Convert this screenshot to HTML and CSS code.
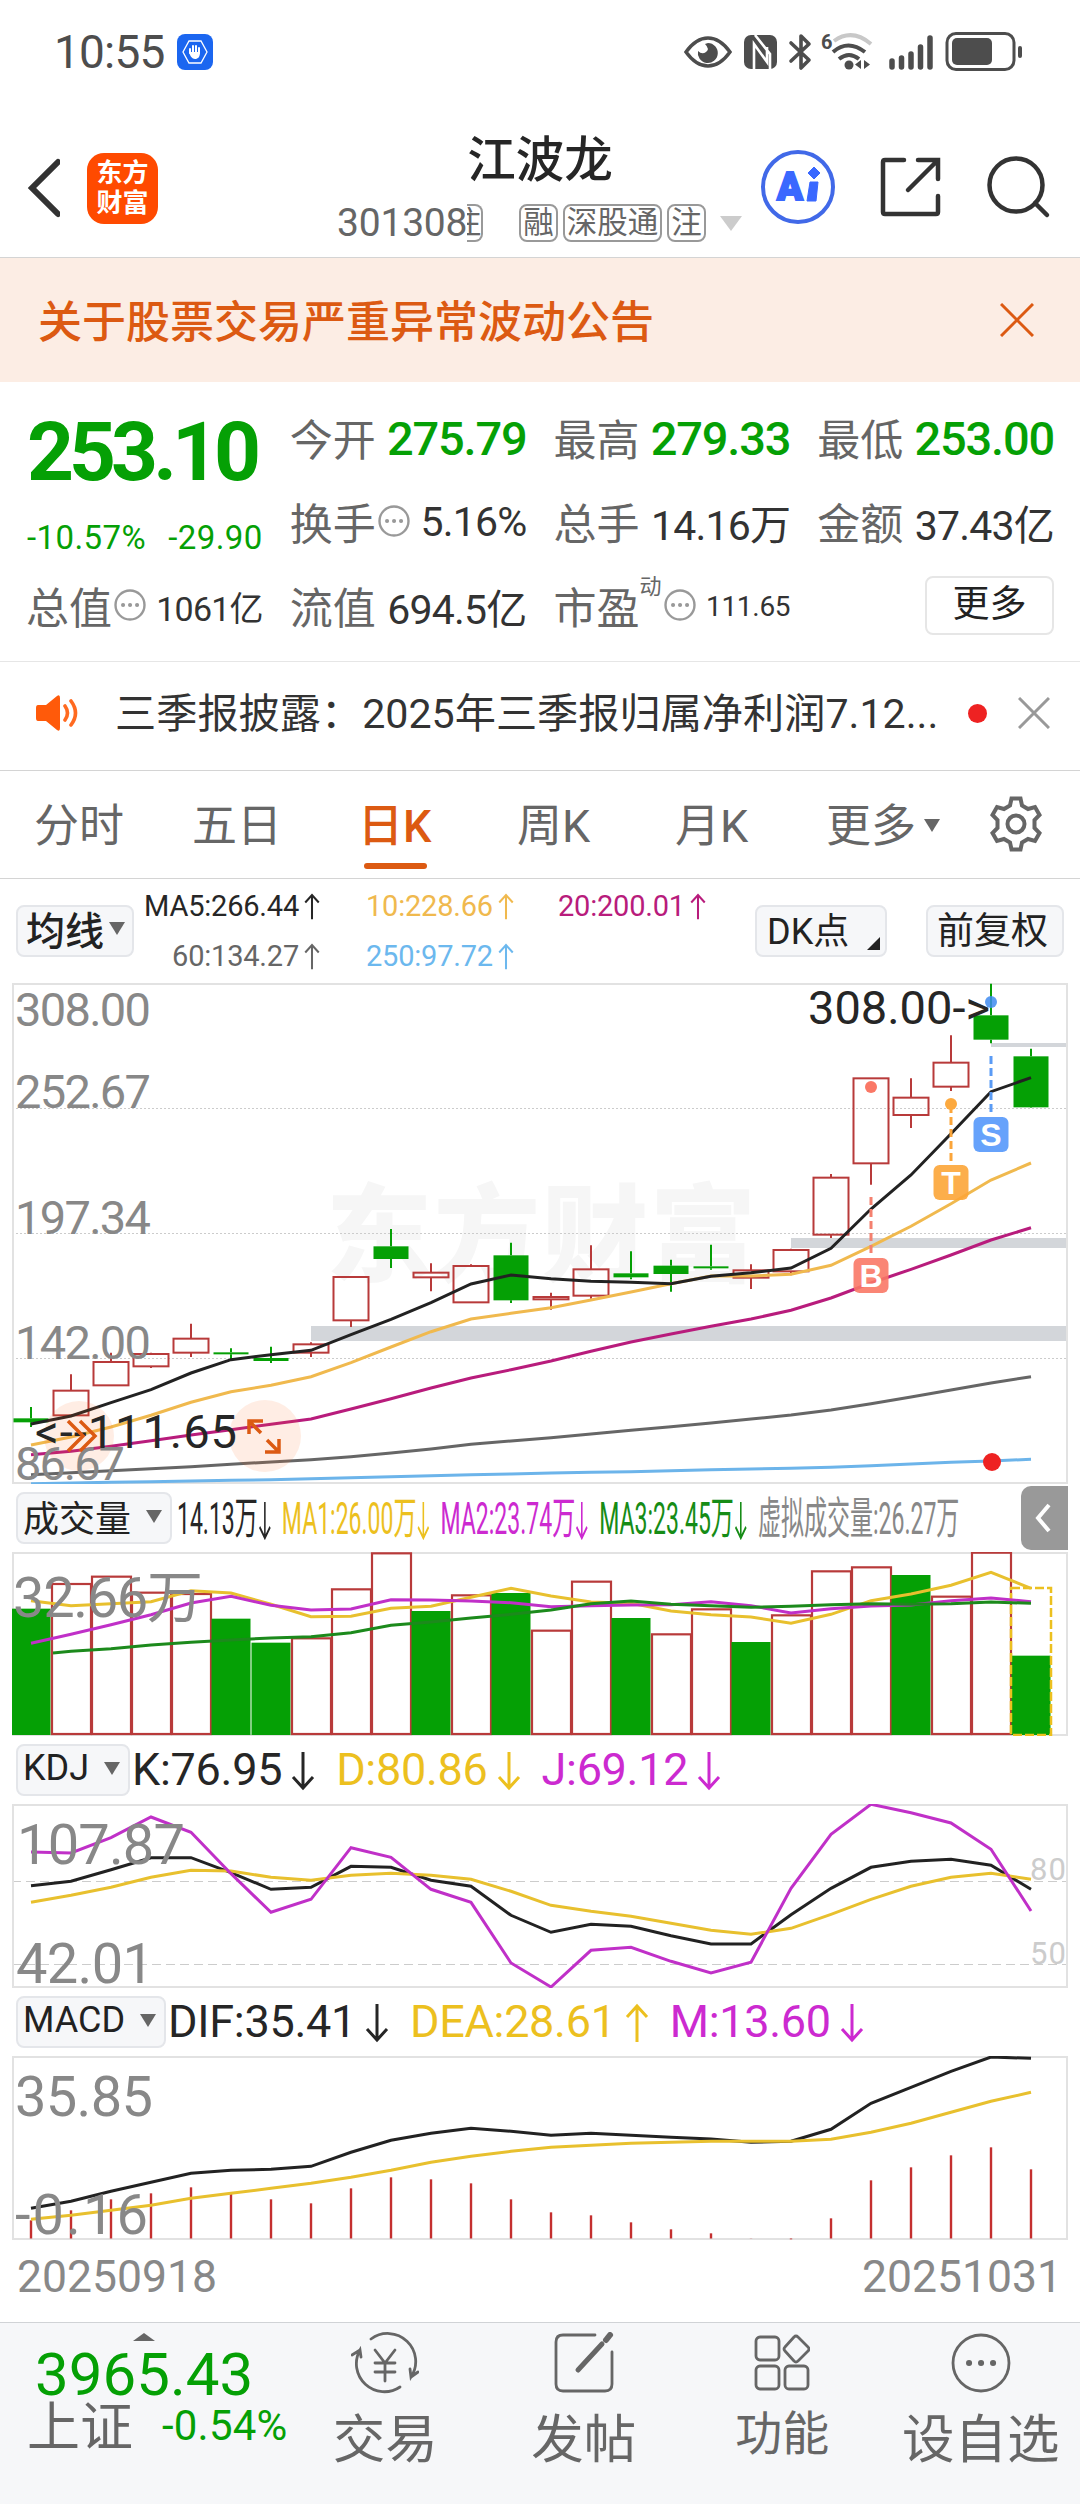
FILE: index.html
```html
<!DOCTYPE html>
<html lang="zh-CN">
<head>
  <meta charset="utf-8">
  <title>江波龙 301308</title>
  <link rel="stylesheet" href="styles.css">
</head>
<body>
  <svg class="defs">
    <symbol id="up" viewBox="0 0 26 40"><path d="M13 39V3M3 14L13 3l10 11"/></symbol>
    <symbol id="down" viewBox="0 0 26 40"><path d="M13 1v36M3 26l10 11 10-11"/></symbol>
    <symbol id="more" viewBox="0 0 34 34"><circle cx="17" cy="17" r="14.5"/><path d="M10 17h.1M17 17h.1M24 17h.1"/></symbol>
  </svg>

  <div class="status">
    <span class="clock">10:55</span>
    <svg class="hand" width="36" height="36" viewBox="0 0 36 36">
      <rect width="36" height="36" rx="8" fill="#1b66f0"/>
      <path d="M12 7h12l6 11-6 11H12L6 18z" fill="none" stroke="#fff" stroke-width="1.3"/>
      <path d="M13 19v-4M16 18v-6M19 18v-6M22 19v-5" stroke="#fff" stroke-width="2" stroke-linecap="round"/>
      <path d="M12 18h11c0 5-2 7-5 7s-5-3-6-7z" fill="#fff"/>
    </svg>
    <svg class="sys" width="340" height="40" viewBox="0 0 340 40">
      <path d="M2 20q10-14 22-14t22 14q-10 14-22 14T2 20z" fill="none" stroke="#4d4d4d" stroke-width="3.5"/>
      <path d="M24 11a10 10 0 1 1-10 8q4 4 8 1t-1-8z" fill="#4d4d4d"/>
      <rect x="60" y="3" width="33" height="34" rx="7" fill="#4d4d4d"/>
      <path d="M70 37V12l13 18V15M71 3l15 19v15" fill="none" stroke="#fff" stroke-width="2.6"/>
      <path d="M107 11l18 17-8 8V4l8 8-18 17" fill="none" stroke="#4d4d4d" stroke-width="3.6" stroke-linejoin="round" stroke-linecap="round"/>
      <text x="137" y="17" class="six">6</text>
      <path d="M150 9q18-13 37 3" fill="none" stroke="#c8c8c8" stroke-width="4"/>
      <path d="M149 20q15-13 32 0M155 27q10-8 20 0" fill="none" stroke="#4d4d4d" stroke-width="4"/>
      <circle cx="165" cy="33" r="4.5" fill="#4d4d4d"/>
      <path d="M177 28v9l-6-4.5zM180 28v9l6-4.5z" fill="#4d4d4d"/>
      <path d="M208 29v6M217.500 26v9M227 22v13M236.500 15v20M246 6v29" stroke="#4d4d4d" stroke-width="5.500" stroke-linecap="round"/>
      <rect x="263" y="1.500" width="67" height="36" rx="9" fill="none" stroke="#4d4d4d" stroke-width="3"/>
      <rect x="268" y="6" width="40" height="27" rx="5" fill="#4d4d4d"/>
      <path d="M336 16v8" stroke="#4d4d4d" stroke-width="4" stroke-linecap="round"/>
    </svg>
  </div>

  <div class="header">
    <svg class="back" width="34" height="60" viewBox="0 0 34 60"><path d="M32 4L6 30l26 26"/></svg>
    <div class="logo">东方<br>财富</div>
    <div class="stock">
      <div class="name">江波龙</div>
      <div class="code-row">
        <span class="code">301308</span><span class="tag cut">注</span>
        <span class="tag">融</span><span class="tag">深股通</span><span class="tag">注</span>
        <i class="tri"></i>
      </div>
    </div>
    <svg class="actions" width="300" height="80" viewBox="0 0 300 80">
      <circle cx="38" cy="40" r="35" fill="none" stroke="#4169e8" stroke-width="4"/>
      <text x="17" y="53" class="ai">A</text>
      <path d="M50 35h8l-2 19h-9zM54 20l6 6-6 6-6-6z" fill="#3a68ff" stroke="#3a68ff" stroke-width="1" stroke-linejoin="round"/>
      <path d="M144 13h-19q-2 0-2 2v50q0 2 2 2h51q2 0 2-2V49M158 13h20v19M177 14l-29 29" class="ink"/>
      <circle cx="256" cy="38" r="26.500" class="ink"/>
      <path d="M275 56l12 12" class="ink"/>
    </svg>
  </div>

  <div class="banner">
    <span>关于股票交易严重异常波动公告</span>
    <svg width="34" height="34" viewBox="0 0 34 34"><path d="M1 1l32 32M33 1L1 33"/></svg>
  </div>

  <div class="quote">
    <div class="price">253.10</div>
    <div class="cell"><label>今开</label><b class="green">275.79</b></div>
    <div class="cell"><label>最高</label><b class="green">279.33</b></div>
    <div class="cell"><label>最低</label><b class="green">253.00</b></div>
    <div class="change"><span>-10.57%</span><span>-29.90</span></div>
    <div class="cell"><label>换手</label><svg class="info"><use href="#more"/></svg><b>5.16%</b></div>
    <div class="cell"><label>总手</label><b>14.16万</b></div>
    <div class="cell"><label>金额</label><b>37.43亿</b></div>
    <div class="cell"><label>总值</label><svg class="info"><use href="#more"/></svg><b class="mid">1061亿</b></div>
    <div class="cell"><label>流值</label><b>694.5亿</b></div>
    <div class="cell"><label>市盈</label><sup>动</sup><svg class="info"><use href="#more"/></svg><b class="small">111.65</b></div>
    <div class="cell"><button class="more">更多</button></div>
  </div>

  <div class="news">
    <svg class="horn" width="46" height="38" viewBox="0 0 46 38">
      <path d="M3 11h8L22 2q3-2 3 2v30q0 4-3 2l-11-9H3q-2 0-2-3V14q0-3 2-3z" fill="#ff5a0a"/>
      <path d="M30 12q5 7 0 14M36 7q9 12 0 24" fill="none" stroke="#ff6a20" stroke-width="3.600" stroke-linecap="round"/>
    </svg>
    <span class="news-text">三季报披露：2025年三季报归属净利润7.12...</span>
    <i class="dot"></i>
    <svg class="close" width="32" height="32" viewBox="0 0 32 32"><path d="M1 1l30 30M31 1L1 31"/></svg>
  </div>

  <div class="tabs">
    <span class="tab">分时</span>
    <span class="tab">五日</span>
    <span class="tab active">日K</span>
    <span class="tab">周K</span>
    <span class="tab">月K</span>
    <span class="tab">更多<i class="tri"></i></span>
    <svg class="gear" width="56" height="56" viewBox="0 0 56 56">
      <path d="M23.500 2.500h9l1.500 7 6 3.500 7-2 4.500 8-5 5v8l5 5-4.500 8-7-2-6 3.500-1.500 7h-9l-1.500-7-6-3.500-7 2-4.500-8 5-5v-8l-5-5 4.500-8 7 2 6-3.500z"/>
      <circle cx="28" cy="28" r="8.500"/>
    </svg>
  </div>

  <div class="toolbar">
    <button class="btn ma">均线<i class="tri"></i></button>
    <div class="legend">
      <span class="c-black">MA5:266.44<svg><use href="#up"/></svg></span>
      <span class="c-gold">10:228.66<svg><use href="#up"/></svg></span>
      <span class="c-pink">20:200.01<svg><use href="#up"/></svg></span>
      <span class="c-gray">60:134.27<svg><use href="#up"/></svg></span>
      <span class="c-blue">250:97.72<svg><use href="#up"/></svg></span>
    </div>
    <button class="btn dk">DK点<i class="corner"></i></button>
    <button class="btn fq">前复权</button>
  </div>

  <svg id="kline" class="panel" viewBox="0 0 1056 501"></svg>

  <div class="sub-head">
    <button class="btn">成交量<i class="tri"></i></button>
    <div class="squeeze">
      <span class="c-black">14.13万<svg><use href="#down"/></svg></span>
      <span class="c-yellow">MA1:26.00万<svg><use href="#down"/></svg></span>
      <span class="c-violet">MA2:23.74万<svg><use href="#down"/></svg></span>
      <span class="c-green">MA3:23.45万<svg><use href="#down"/></svg></span>
      <span class="c-light">虚拟成交量:26.27万</span>
    </div>
    <div class="fold"><svg width="16" height="30" viewBox="0 0 16 30"><path d="M14 2L3 15l11 13"/></svg></div>
  </div>
  <svg id="volume" class="panel" viewBox="0 0 1056 184"></svg>

  <div class="sub-head values">
    <button class="btn">KDJ<i class="tri"></i></button>
    <span class="c-black">K:76.95<svg><use href="#down"/></svg></span>
    <span class="c-yellow">D:80.86<svg><use href="#down"/></svg></span>
    <span class="c-violet">J:69.12<svg><use href="#down"/></svg></span>
  </div>
  <svg id="kdj" class="panel" viewBox="0 0 1056 184"></svg>

  <div class="sub-head values">
    <button class="btn">MACD<i class="tri"></i></button>
    <span class="c-black">DIF:35.41<svg><use href="#down"/></svg></span>
    <span class="c-yellow">DEA:28.61<svg><use href="#up"/></svg></span>
    <span class="c-violet">M:13.60<svg><use href="#down"/></svg></span>
  </div>
  <svg id="macd" class="panel" viewBox="0 0 1056 184"></svg>

  <div class="dates"><span>20250918</span><span>20251031</span></div>

  <div class="footer">
    <div class="index">
      <i class="tri-up"></i>
      <div class="point">3965.43</div>
      <div class="index-row"><span>上证</span><em>-0.54%</em></div>
    </div>
    <div class="item">
      <svg width="68" height="62" viewBox="0 0 68 62">
        <path d="M20 7a28 28 0 0 1 40 38l-1-8M60 45l7-5M49 55A28 28 0 0 1 9 18l1 7M9 18l-8 5"/>
        <path d="M24 18l10 13 10-13M34 31v18M24 31h20M24 40h20"/>
      </svg>
      <span>交易</span>
    </div>
    <div class="item">
      <svg width="60" height="62" viewBox="0 0 60 62">
        <path d="M41 3H9q-7 0-7 7v42q0 7 7 7h42q7 0 7-7V20"/>
        <path d="M24 38L48 12" stroke-width="5"/><path d="M52 8l4-5" stroke-width="6"/>
      </svg>
      <span>发帖</span>
    </div>
    <div class="item small">
      <svg width="56" height="62" viewBox="0 0 56 62">
        <rect x="2" y="5" width="23" height="23" rx="4"/>
        <rect x="2" y="34" width="23" height="23" rx="4"/>
        <rect x="31" y="34" width="23" height="23" rx="4"/>
        <path d="M40 5q2-2 4 0l10 10q2 2 0 4L44 29q-2 2-4 0L31 19q-2-2 0-4z"/>
      </svg>
      <span>功能</span>
    </div>
    <div class="item">
      <svg width="62" height="62" viewBox="0 0 62 62">
        <circle cx="31" cy="31" r="28"/>
        <path d="M19 31h.1M31 31h.1M43 31h.1" stroke-width="6"/>
      </svg>
      <span>设自选</span>
    </div>
  </div>
  <script src="chart.js"></script>
</body>
</html>
```
FILE: styles.css
```css
* {
  margin: 0;
  padding: 0;
  box-sizing: border-box;
}

body {
  width: 1080px;
  background: #fff;
  color: #333;
  font-family: Roboto, "Noto Sans CJK SC", sans-serif;
}

i, em, b { font-style: normal; }
button { font-family: inherit; color: #222; }
.defs { display: none; }
symbol path, symbol circle {
  fill: none;
  stroke: currentColor;
  stroke-width: 3;
}
#more circle { stroke-width: 2.4; }
#more path { stroke-width: 4; stroke-linecap: round; }

.green { color: #05a005; }
.c-black { color: #262626; }
.c-gold { color: #f0b94e; }
.c-pink { color: #b81c7c; }
.c-gray { color: #666; }
.c-blue { color: #6cb8ee; }
.c-yellow { color: #ecc01f; }
.c-violet { color: #cc2ad0; }
.c-green { color: #168c16; }
.c-light { color: #888; }

.tri {
  display: inline-block;
  border: 8px solid transparent;
  border-top: 13px solid #666;
  border-bottom: 0;
}

/* status bar */
.status {
  display: flex;
  align-items: center;
  height: 104px;
  padding-left: 54px;
}
.clock {
  font-size: 46px;
  letter-spacing: -0.8px;
  color: #4d4d4d;
  width: 123px;
}
.sys { margin-left: 471px; }
.six { font-size: 20px; font-weight: bold; fill: #4d4d4d; }

/* header */
.header {
  display: flex;
  height: 154px;
  padding-left: 26px;
  border-bottom: 1px solid #d4d4d4;
}
.back {
  margin-top: 54px;
  fill: none;
  stroke: #333;
  stroke-width: 6;
  stroke-linecap: round;
}
.logo {
  width: 71px;
  height: 71px;
  margin: 49px 0 0 27px;
  padding-top: 5px;
  border-radius: 17px;
  background: #ff4a00;
  color: #fff;
  font-size: 26px;
  font-weight: bold;
  line-height: 30px;
  text-align: center;
}
.stock {
  width: 402px;
  margin: 28px 0 0 179px;
}
.name {
  height: 58px;
  line-height: 58px;
  font-size: 48.5px;
  text-align: center;
  font-weight: 500;
  color: #262626;
  padding-left: 4px;
}
.code-row {
  display: flex;
  align-items: center;
  height: 66px;
  color: #666;
  white-space: nowrap;
}
.code { width: 131px; font-size: 39px; letter-spacing: -0.2px; }
.tag {
  flex: none;
  height: 38px;
  margin-right: 5px;
  padding: 0 2px;
  border: 2px solid #999;
  border-radius: 8px;
  font-size: 30.5px;
  line-height: 33px;
}
.cut {
  width: 16px;
  margin-right: 36px;
  padding: 0;
  border-left: 0;
  border-radius: 0 8px 8px 0;
  overflow: hidden;
  direction: rtl;
}
.code-row .tri {
  margin-left: 9px;
  border-width: 15px 11px 0;
  border-top-color: #ccc;
}
.actions { margin: 43px 0 0 21px; }
.ai {
  font-size: 38px;
  font-weight: 900;
  fill: #3a68ff;
  stroke: #3a68ff;
  stroke-width: 2;
}
.ink {
  fill: none;
  stroke: #333;
  stroke-width: 4.5;
  stroke-linecap: round;
}

/* notice */
.banner {
  display: flex;
  justify-content: space-between;
  align-items: center;
  height: 124px;
  padding: 0 46px 0 38px;
  background: #fcede4;
  color: #dc5a12;
  font-size: 44px;
}
.banner span { margin-top: -3px; font-weight: 500; }
.banner svg, .close {
  fill: none;
  stroke: #dc5a12;
  stroke-width: 3;
}

/* quote */
.quote {
  display: grid;
  grid-template-columns: repeat(4, 1fr);
  grid-template-rows: repeat(3, 84px);
  column-gap: 28px;
  height: 280px;
  padding: 13px 26px 0 27px;
  border-bottom: 1px solid #e6e6e6;
}
.price {
  font-size: 82px;
  font-weight: bold;
  line-height: 115px;
  letter-spacing: -5px;
  color: #05a005;
}
.change {
  display: flex;
  justify-content: space-between;
  padding-top: 39px;
  font-size: 33px;
  line-height: 39px;
  letter-spacing: 0.4px;
  color: #05a005;
}
.cell {
  display: flex;
  align-items: center;
  white-space: nowrap;
}
.cell label { margin-left: -1px; font-size: 43px; color: #666; }
.cell b {
  margin-left: auto;
  font-size: 41px;
  font-weight: 400;
  letter-spacing: -0.8px;
  padding-top: 2px;
}
.cell b.green { font-size: 47px; font-weight: 500; letter-spacing: -1.2px; padding: 3px 0 0; }
.cell b.mid { font-size: 34px; }
.cell b.small { font-size: 28px; letter-spacing: -0.3px; }
.cell sup { font-size: 22px; color: #666; margin-top: -42px; }
.info { width: 34px; height: 34px; color: #999; margin-left: 1px; }
.more {
  width: 129px;
  height: 59px;
  margin-left: auto;
  border: 2px solid #e6e6e6;
  border-radius: 8px;
  background: #fff;
  font-size: 37px;
  line-height: 50px;
}

/* news line */
.news {
  display: flex;
  align-items: center;
  height: 109px;
  padding: 0 30px 6px 35px;
  border-bottom: 1px solid #d4d4d4;
}
.news-text {
  width: 823px;
  margin: -6px 0 0 34px;
  font-size: 41.2px;
  white-space: nowrap;
}
.dot {
  width: 19px;
  height: 19px;
  margin-left: 30px;
  border-radius: 50%;
  background: #ee2222;
}
.close { margin-left: auto; stroke: #999; }

/* tabs */
.tabs {
  display: flex;
  align-items: center;
  height: 108px;
  padding: 0 36px 4px 34px;
  border-bottom: 1px solid #d4d4d4;
  font-size: 45px;
  color: #666;
}
.tab {
  position: relative;
  width: 158px;
  white-space: nowrap;
}
.tab:nth-child(2) { width: 166px; }
.tab:nth-child(3) { width: 159px; }
.tab:nth-child(5) { width: 151px; }
.tab .tri { margin: 0 0 10px 8px; }
.active { color: #dc5a12; font-weight: 500; }
.active::after {
  content: "";
  position: absolute;
  left: 6px;
  bottom: -14px;
  width: 63px;
  height: 6px;
  border-radius: 3px;
  background: #dc5a12;
}
.gear {
  margin: 3px 0 0 auto;
  fill: none;
  stroke: #666;
  stroke-width: 4;
}

/* chart toolbar */
.toolbar {
  display: flex;
  align-items: center;
  height: 104px;
  padding: 0 16px;
}
.btn {
  display: flex;
  align-items: center;
  justify-content: space-between;
  flex: none;
  height: 52px;
  padding: 0 9px 6px;
  border: 2px solid #e4e6ea;
  border-radius: 8px;
  background: #f6f7f9;
  font-size: 36px;
  white-space: nowrap;
}
.ma { width: 118px; padding: 0 7px 6px 8px; font-size: 39px; font-weight: 500; }
.dk {
  position: relative;
  width: 132px;
  margin-left: auto;
  padding-left: 10px;
}
.corner {
  position: absolute;
  right: 5px;
  bottom: 5px;
  border-left: 13px solid transparent;
  border-bottom: 13px solid #222;
}
.fq { width: 138px; margin-left: 39px; font-size: 37px; }
.legend {
  display: grid;
  grid-template-columns: 187px 147px 147px;
  column-gap: 45px;
  row-gap: 16px;
  font-size: 29px;
  line-height: 34px;
  white-space: nowrap;
}
.legend span { text-align: right; letter-spacing: -0.2px; }
.legend svg { width: 18px; height: 27px; margin-left: 4px; vertical-align: -4px; }

/* charts */
.panel {
  display: block;
  width: 1056px;
  margin-left: 12px;
}
.panel text { fill: #888; font-size: 47px; }
.panel text.big { font-size: 56px; }
.panel text.note { fill: #262626; }
.panel text.level { fill: #ccc; font-size: 31px; }
.panel text.badge { fill: #fff; font: bold 32px "Liberation Sans", sans-serif; }
.panel text.mark { fill: #f6f6f6; font-size: 106px; font-weight: 900; }

.sub-head {
  display: flex;
  align-items: center;
  height: 68px;
  padding-left: 16px;
  white-space: nowrap;
}
.sub-head .btn { min-width: 112px; padding: 0 8px 4px 5px; }
.sub-head .btn .tri { margin-left: 15px; border-width: 13px 8px 0; }
.squeeze {
  display: flex;
  width: 1440px;
  gap: 20px;
  margin: -6px -620px 0 5px;
  font-size: 44px;
  transform: scaleX(0.523);
  transform-origin: left;
}
.squeeze svg { width: 26px; height: 40px; vertical-align: -7px; }
.fold {
  position: relative;
  flex: none;
  width: 47px;
  height: 64px;
  margin: 0 12px 0 auto;
  padding: 17px 14px;
  border-radius: 10px 0 0 10px;
  background: #999;
}
.fold path { fill: none; stroke: #fff; stroke-width: 4; }
.values { font-size: 45px; }
.values span { margin: -2px 18px 0 2px; letter-spacing: -0.3px; }
.values span svg { width: 26px; height: 40px; margin-left: 8px; vertical-align: -6px; }

.dates {
  display: flex;
  justify-content: space-between;
  height: 82px;
  padding: 11px 18px 0 17px;
  font-size: 44.5px;
  line-height: 52px;
  color: #888;
}

/* bottom bar */
.footer {
  display: flex;
  height: 182px;
  border-top: 1px solid #d0d3d6;
  background: #f6f7f9;
  color: #666;
}
.index { width: 286px; padding-left: 27px; white-space: nowrap; }
.tri-up {
  display: block;
  width: 22px;
  margin: 10px 0 0 106px;
  border: 11px solid transparent;
  border-top: 0;
  border-bottom: 8px solid #666;
}
.point {
  margin: 3px 0 0 8px;
  font-size: 60px;
  line-height: 62px;
  color: #05a005;
}
.index-row { display: flex; align-items: center; height: 52px; margin-top: -9px; font-size: 53px; }
.index-row em { margin: 4px 0 0 29px; font-size: 42px; letter-spacing: 0.2px; color: #05a005; }
.item {
  flex: 1;
  display: flex;
  flex-direction: column;
  align-items: center;
  padding-top: 9px;
  font-size: 52.5px;
  line-height: 60px;
  white-space: nowrap;
}
.item span { margin-top: 16px; }
.item.small { font-size: 47px; }
.item.small span { margin-top: 10px; }
.item svg {
  fill: none;
  stroke: #666;
  stroke-width: 2.8;
  stroke-linecap: round;
}
```
FILE: chart.js
```js
// all series are stored at 3x, y is measured from the given base
const STEP = 40;
const RED = '#b83a3a';
const GREEN = '#05a005';
const cx = i => 19 + STEP * i;

const line = (data, base, color, width = 3, first = 0) => {
  const pts = data.map((v, i) => `${cx(i === 0 ? first : i)},${((v - base) / 3).toFixed(1)}`);
  return `<polyline points="${pts.join(' ')}" fill="none" stroke="${color}" stroke-width="${width}"/>`;
};
const frame = h => `<rect x="1" y="1" width="1054" height="${h - 2}" fill="none" stroke="#e2e2e2" stroke-width="2"/>`;
const label = (s, x, y, w, cls = '') => `<text x="${x}" y="${y}" textLength="${w}" class="${cls}">${s}</text>`;

// ---- K line: [color, top, bottom, high, low] ----
const candles = [
  ['g', 1344, 1356, 1310, 1370], ['r', 1261, 1335, 1212, 1337], ['r', 1175, 1245, 1147, 1245],
  ['r', 1151, 1188, 1147, 1193], ['r', 1105, 1147, 1060, 1160], ['g', 1146, 1152, 1134, 1168],
  ['g', 1163, 1172, 1129, 1178], ['r', 1122, 1147, 1116, 1160], ['r', 920, 1050, 920, 1070],
  ['g', 828, 866, 776, 893], ['r', 907, 921, 879, 963], ['r', 887, 996, 882, 998],
  ['g', 855, 990, 817, 998], ['r', 980, 987, 967, 1018], ['r', 897, 976, 825, 985],
  ['g', 909, 921, 843, 927], ['g', 886, 911, 868, 964], ['g', 888, 894, 823, 898],
  ['r', 900, 922, 882, 956], ['r', 839, 903, 835, 915], ['r', 622, 793, 611, 803],
  ['r', 324, 579, 324, 643], ['r', 382, 434, 324, 473], ['r', 277, 349, 195, 362],
  ['g', 135, 208, 40, 219], ['g', 258, 411, 235, 412]
];
const ma5 = [1361, 1337, 1297, 1258, 1208, 1168, 1153, 1140, 1093, 1047, 997, 941, 914, 925, 933, 936, 940, 918, 907, 893, 834, 716, 614, 490, 364, 322];
const ma10 = [1424, 1400, 1370, 1335, 1296, 1264, 1245, 1219, 1177, 1130, 1084, 1046, 1029, 1012, 989, 965, 940, 917, 917, 912, 885, 828, 768, 700, 629, 578];
const ma20 = [1453, 1443, 1428, 1411, 1394, 1378, 1362, 1346, 1316, 1285, 1253, 1223, 1198, 1172, 1143, 1115, 1091, 1068, 1046, 1020, 983, 938, 897, 854, 809, 772];
const ma60 = [1513, 1507, 1501, 1495, 1489, 1482, 1475, 1468, 1459, 1448, 1436, 1422, 1412, 1402, 1391, 1380, 1369, 1358, 1346, 1334, 1319, 1300, 1280, 1259, 1238, 1219];
const ma250 = [1540, 1538, 1536, 1534, 1532, 1530, 1528, 1525, 1522, 1519, 1516, 1513, 1511, 1508, 1506, 1504, 1501, 1498, 1496, 1494, 1491, 1486, 1481, 1476, 1472, 1467];

const BASE = 38;
const ky = v => (v - BASE) / 3;

const drawCandle = ([c, top, bottom, high, low], i) => {
  const x = cx(i), t = ky(top), b = ky(bottom);
  const color = c === 'g' ? GREEN : RED;
  const body = c === 'g'
    ? `<rect x="${x - 17.5}" y="${t}" width="35" height="${b - t}" fill="${GREEN}"/>`
    : `<rect x="${x - 17.5}" y="${t}" width="35" height="${b - t}" fill="none" stroke="${RED}" stroke-width="2"/>`;
  return body + `<path d="M${x} ${ky(high)}V${t}M${x} ${b}V${ky(low)}" stroke="${color}" stroke-width="2"/>`;
};

const badge = (s, i, y, color) => `
  <rect x="${cx(i) - 17.5}" y="${y}" width="35" height="35" rx="6" fill="${color}" opacity="0.9"/>
  <text x="${cx(i)}" y="${y + 29}" text-anchor="middle" class="badge">${s}</text>`;

const stem = (i, y1, y2, color) =>
  `<path d="M${cx(i)} ${y1}V${y2}" stroke="${color}" stroke-width="3" stroke-dasharray="8 4"/>`;

document.getElementById('kline').innerHTML = `
  <text x="314" y="290" textLength="430" class="mark">东方财富</text>
  <path d="M0 125.500H1056M0 250.500H1056M0 375.500H1056" stroke="#ccc" stroke-dasharray="2 2"/>
  <path d="M299 343h757v15H299zM779 255h277v10H779zM979 60h77v4h-77z" fill="#d3d6da"/>
  ${frame(501)}
  ${candles.map(drawCandle).join('')}
  ${line(ma250, BASE, '#6cb4ea')}
  ${line(ma60, BASE, '#666')}
  ${line(ma20, BASE, '#b81c7c')}
  ${line(ma10, BASE, '#f0b94e')}
  ${line(ma5, BASE, '#222')}
  <circle cx="67" cy="453" r="35" fill="#ff6a20" opacity="0.12"/>
  <circle cx="253" cy="453" r="36" fill="#ff6a20" opacity="0.12"/>
  ${label('308.00', 3, 43, 136)}
  ${label('252.67', 3, 125, 136)}
  ${label('197.34', 3, 251, 136)}
  ${label('142.00', 3, 376, 136)}
  ${label('86.67', 3, 497, 110)}
  ${label('&lt;--111.65', 23, 465, 202, 'note')}
  ${label('308.00-&gt;', 796, 41, 182, 'note')}
  <path d="M56 438l15 15-15 15M68 438l15 15-15 15" fill="none" stroke="#dc5a12" stroke-width="3.500"/>
  <path d="M249 450l-12-12M237 451v-13h14M255 457l12 12M267 456v13h-14" fill="none" stroke="#dc5a12" stroke-width="3.500"/>
  ${stem(21, 214, 272, '#f4806f')}
  ${stem(23, 122, 180, '#fba53a')}
  ${stem(24, 73, 131, '#5a9bf5')}
  <circle cx="859" cy="104" r="6" fill="#fa7866"/>
  <circle cx="939" cy="121" r="6" fill="#fca93f"/>
  <circle cx="979" cy="19" r="6" fill="#3f8bf0" opacity="0.85"/>
  ${badge('B', 21, 275, '#fa7866')}
  ${badge('T', 23, 182, '#fca537')}
  ${badge('S', 24, 134, '#5598fb')}
  <circle cx="980" cy="479" r="9" fill="#ee2222"/>`;

// ---- volume ----
const volume = [
  ['g', 386], ['r', 312], ['r', 290], ['r', 338], ['r', 342], ['g', 416], ['g', 488], ['r', 475], ['r', 328],
  ['r', 220], ['g', 393], ['r', 346], ['g', 339], ['r', 452], ['r', 305], ['g', 414], ['r', 463], ['r', 388],
  ['g', 486], ['r', 406], ['r', 274], ['r', 262], ['g', 285], ['r', 350], ['r', 218], ['g', 527]
];
const vma1 = [362, 377, 371, 365, 332, 339, 373, 410, 409, 385, 379, 352, 325, 348, 366, 370, 393, 404, 411, 430, 403, 362, 342, 316, 277, 325];
const vma2 = [490, 463, 434, 404, 369, 349, 376, 390, 387, 359, 360, 363, 368, 380, 377, 375, 374, 365, 377, 399, 386, 378, 375, 362, 354, 365];
const vma3 = [519, 514, 506, 495, 487, 480, 474, 470, 458, 436, 426, 414, 403, 390, 371, 363, 373, 377, 382, 379, 374, 371, 373, 371, 366, 370];

const drawVolume = ([c, top], i) => {
  const y = (top - 216) / 3, x = cx(i) - 19.5;
  return c === 'g'
    ? `<rect x="${x}" y="${y}" width="39" height="${183 - y}" fill="${GREEN}"/>`
    : `<rect x="${x + .5}" y="${y}" width="39" height="${182 - y}" fill="none" stroke="${RED}" stroke-width="2.200"/>`;
};

document.getElementById('volume').innerHTML = `
  ${frame(184)}
  ${volume.map(drawVolume).join('')}
  <rect x="999" y="36" width="40" height="147" fill="none" stroke="#ecc01f" stroke-width="2.500" stroke-dasharray="9 3"/>
  ${line(vma1, 216, '#e8c02e')}
  ${line(vma2, 216, '#c030c8')}
  ${line(vma3, 216, '#1c8a1c', 3, 0.55)}
  ${label('32.66万', 1, 65, 190, 'big')}`;

// ---- KDJ ----
const k = [286, 273, 238, 202, 202, 247, 297, 291, 228, 231, 270, 288, 375, 426, 402, 408, 436, 461, 461, 373, 294, 231, 213, 207, 225, 297];
const d = [336, 315, 291, 261, 240, 242, 261, 270, 255, 249, 255, 267, 303, 345, 363, 378, 399, 420, 432, 414, 372, 327, 288, 261, 249, 267];
const j = [185, 188, 142, 80, 126, 250, 366, 327, 172, 201, 297, 336, 518, 590, 480, 471, 513, 548, 516, 294, 132, 42, 67, 98, 177, 362];

document.getElementById('kdj').innerHTML = `
  <path d="M0 77.500H1056M0 160.500H1056" stroke="#ccc" stroke-dasharray="9 5"/>
  ${frame(184)}
  ${line(k, 41, '#222')}
  ${line(d, 41, '#e8c02e')}
  ${line(j, 41, '#c030c8')}
  ${label('107.87', 5, 60, 168, 'big')}
  ${label('42.01', 4, 179, 138, 'big')}
  ${label('80', 1018, 76, 36, 'level')}
  ${label('50', 1018, 160, 36, 'level')}`;

// ---- MACD ----
const dif = [504, 483, 453, 426, 399, 390, 387, 378, 336, 300, 279, 264, 273, 285, 279, 285, 291, 296, 306, 303, 267, 189, 141, 93, 50, 54];
const dea = [537, 525, 510, 495, 474, 459, 444, 429, 411, 390, 366, 348, 333, 321, 315, 309, 306, 303, 303, 303, 297, 276, 249, 216, 183, 156];
const bars = [540, 510, 477, 459, 441, 457, 477, 489, 444, 411, 417, 429, 477, 516, 525, 546, 567, 579, 594, 597, 534, 420, 381, 345, 321, 387];

document.getElementById('macd').innerHTML = `
  ${frame(184)}
  ${bars.map((v, i) => `<path d="M${cx(i)} ${(v - 47) / 3}V182.500" stroke="#c42f2f" stroke-width="2.400"/>`).join('')}
  ${line(dif, 47, '#222')}
  ${line(dea, 47, '#e8c02e')}
  ${label('35.85', 3, 60, 138, 'big')}
  ${label('-0.16', 3, 178, 133, 'big')}`;
```
